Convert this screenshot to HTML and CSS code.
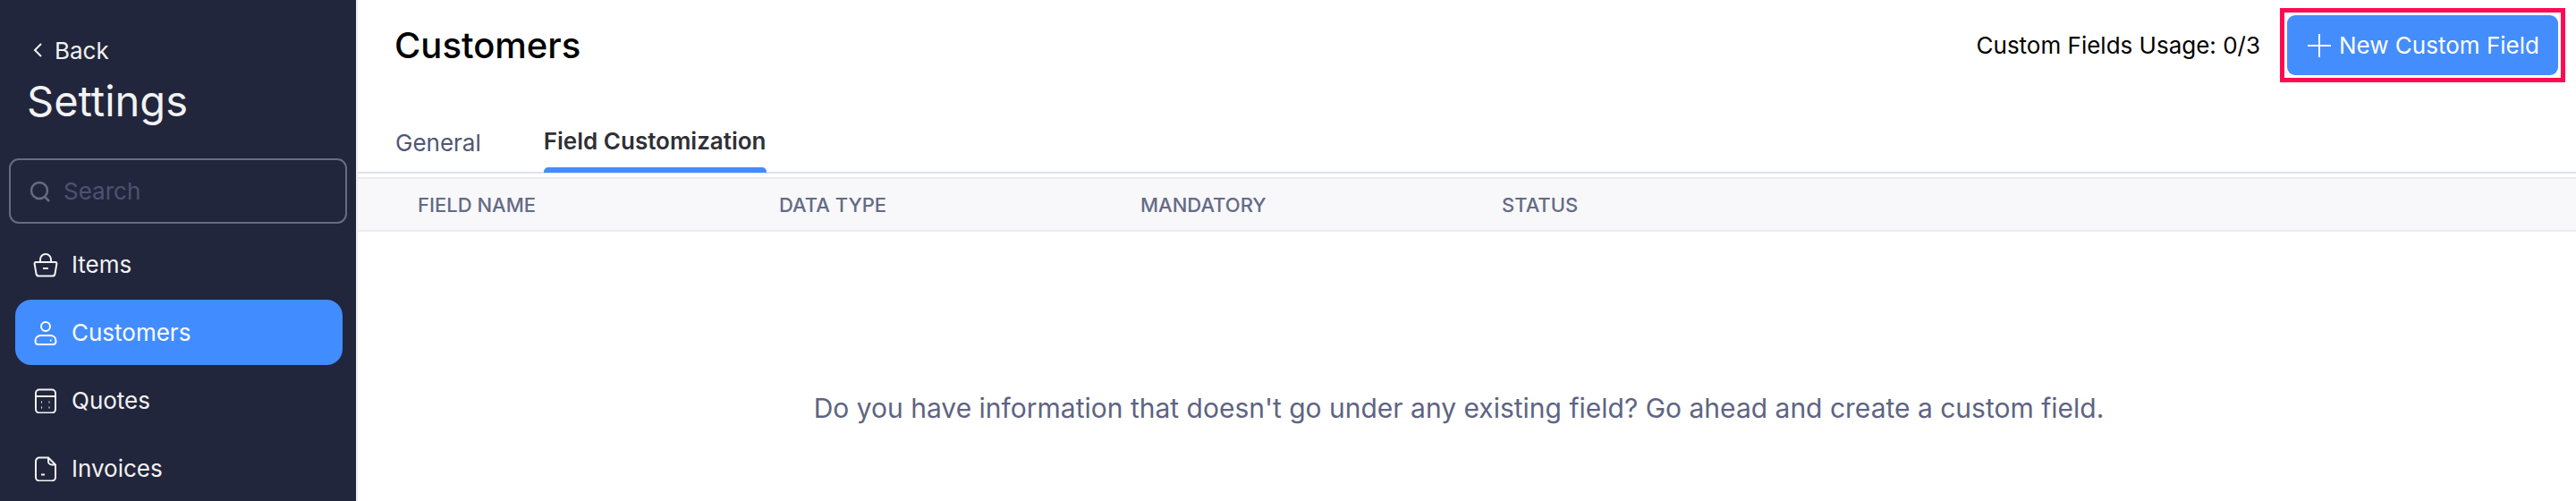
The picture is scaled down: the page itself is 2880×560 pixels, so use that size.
FILE: index.html
```html
<!DOCTYPE html>
<html lang="en">
  <head>
    <meta charset="UTF-8" />
    <title>Customers - Settings</title>
    <link rel="stylesheet" href="styles.css">
  </head>
  <body>
    <div class="app">
      <!-- Sidebar -->
      <aside class="sidebar">
        <a class="back-link" href="#">
          <svg class="back-icon" viewBox="0 0 12 18" fill="none"><path d="M10 2 3 9l7 7" /></svg>
          Back
        </a>
        <h2>Settings</h2>
        <div class="search">
          <svg class="search-icon" viewBox="0 0 24 24" fill="none"><circle cx="11" cy="11" r="9" /><path d="m17 18 5 5" /></svg>
          <span>Search</span>
        </div>
        <ul class="nav">
          <li>
            <svg viewBox="0 0 28 28" fill="none"><path d="M8 11V8a6 6 0 0 1 12 0v3" /><path d="M3 11h22a1.500 1.500 0 0 1 1.400 1.800L24.500 24a3 3 0 0 1-3 2.500h-15a3 3 0 0 1-3-2.500L1.600 12.800A1.500 1.500 0 0 1 3 11Z" /><path d="M11 18h6" /></svg>
            Items
          </li>
          <li class="active">
            <svg viewBox="0 0 28 28" fill="none"><circle cx="14" cy="7" r="5" /><path d="M8 17h12a6 6 0 0 1 5.500 6c0 2-1 4-3 4H5.500c-2 0-3-2-3-4A6 6 0 0 1 8 17Z" /><path d="M19 22.500h1.500" /></svg>
            Customers
          </li>
          <li>
            <svg viewBox="0 0 28 28" fill="none"><rect x="3" y="1.500" width="22" height="26" rx="4" /><path d="M3 9h22" /><path d="M9 15.500h1M17.500 15.500h1M9 21.500h1M17.500 21.500h1" /></svg>
            Quotes
          </li>
          <li>
            <svg viewBox="0 0 28 28" fill="none"><path d="M17 1.500H7a4 4 0 0 0-4 4v18a4 4 0 0 0 4 4h14a4 4 0 0 0 4-4V9.500Z" /><path d="M17 1.500v4a4 4 0 0 0 4 4h4" /><path d="M9 20.500h4" /></svg>
            Invoices
          </li>
        </ul>
      </aside>

      <!-- Content Area -->
      <main class="content">
        <header class="topbar">
          <h1>Customers</h1>
          <div class="topbar-right">
            <span class="usage">Custom Fields Usage: 0/3</span>
            <div class="highlight">
              <button class="new-button" type="button">
                <svg viewBox="0 0 26 26" fill="none"><path d="M13 0v26M0 13h26" /></svg>
                New Custom Field
              </button>
            </div>
          </div>
        </header>

        <nav class="tabs">
          <a href="#">General</a>
          <a class="active" href="#">Field Customization</a>
        </nav>

        <div class="table-head">
          <span>Field Name</span>
          <span>Data Type</span>
          <span>Mandatory</span>
          <span>Status</span>
        </div>

        <p class="empty">Do you have information that doesn't go under any existing field? Go ahead and create a custom field.</p>
      </main>
    </div>
  </body>
</html>
```

FILE: styles.css
```css
* {
  margin: 0;
  padding: 0;
  box-sizing: border-box;
}

html,
body {
  height: 100%;
  overflow: hidden;
}

body {
  font-family: Inter, "Noto Sans", sans-serif;
  background: #fff;
}

.app {
  display: flex;
  height: 560px;
  overflow: hidden;
}

/* Sidebar */
.sidebar {
  width: 400px;
  flex-shrink: 0;
  height: 100%;
  padding: 0 10px;
  background: #22263c;
  border-right: 2px solid #ecedf2;
  color: #f2f2f2;
  overflow: hidden;
}

.back-link {
  display: flex;
  align-items: center;
  gap: 13px;
  margin: 40px 0 0 26px;
  height: 32px;
  font-size: 26px;
  color: #f2f2f2;
  text-decoration: none;
}

.back-icon {
  width: 12px;
  height: 18px;
}

.back-icon path {
  stroke: #f2f2f2;
  stroke-width: 2;
}

.sidebar h2 {
  margin: 13px 0 0 20px;
  font-size: 47px;
  line-height: 56px;
  font-weight: 400;
  color: #f2f2f2;
}

.search {
  display: flex;
  align-items: center;
  gap: 14px;
  width: 378px;
  height: 73px;
  margin-top: 36px;
  padding-left: 21px;
  border: 2px solid #686c83;
  border-radius: 11px;
  font-size: 26px;
  color: #4d5270;
}

.search-icon {
  width: 24px;
  height: 24px;
}

.search-icon circle,
.search-icon path {
  stroke: #686c83;
  stroke-width: 2.500;
}

.nav {
  list-style: none;
  margin: 9px 0 0 7px;
}

.nav li {
  display: flex;
  align-items: center;
  gap: 15px;
  width: 366px;
  height: 73px;
  margin-bottom: 3px;
  padding-left: 20px;
  border-radius: 18px;
  font-size: 26px;
}

.nav li svg {
  width: 28px;
  height: 28px;
  flex-shrink: 0;
}

.nav li svg * {
  stroke: #f2f2f2;
  stroke-width: 2;
}

.nav li.active {
  background: #418dff;
  color: #fff;
}

.nav li.active svg * {
  stroke: #fff;
}

/* Content */
.content {
  flex-grow: 1;
  min-width: 0;
}

.topbar {
  display: flex;
  align-items: center;
  justify-content: space-between;
  height: 101px;
  padding: 0 12px 0 41px;
}

.topbar h1 {
  font-size: 40px;
  font-weight: 500;
  color: #000;
}

.topbar-right {
  display: flex;
  align-items: center;
  gap: 22px;
}

.usage {
  font-size: 26px;
  color: #000;
}

.highlight {
  padding: 3px;
  border: 5px solid #ff0a50;
}

.new-button {
  display: flex;
  align-items: center;
  gap: 9px;
  width: 303px;
  height: 67px;
  padding-left: 23px;
  border: none;
  border-radius: 9px;
  background: #448dfd;
  font-family: inherit;
  font-size: 26px;
  color: #fff;
}

.new-button svg {
  width: 26px;
  height: 26px;
}

.new-button svg path {
  stroke: #fff;
  stroke-width: 2;
}

.tabs {
  display: flex;
  gap: 70px;
  height: 93px;
  padding: 0 0 0 42px;
  border-bottom: 2px solid #dfe2ea;
}

.tabs a {
  display: block;
  height: 92px;
  padding-top: 40px;
  font-size: 26px;
  line-height: 38px;
  color: #4f5672;
  text-decoration: none;
}

.tabs a.active {
  padding-top: 38px;
  font-weight: 600;
  color: #2f3035;
}

.tabs a.active::after {
  content: "";
  display: block;
  height: 6px;
  margin-top: 10px;
  background: #418dff;
  border-radius: 5px 5px 0 0;
}

.table-head {
  display: grid;
  grid-template-columns: repeat(4, 404px);
  align-items: center;
  height: 61px;
  margin-top: 4px;
  padding-left: 67px;
  background: #f8f8fb;
  border-top: 2px solid #ebebf3;
  border-bottom: 2px solid #ebebf3;
  font-size: 22px;
  font-weight: 500;
  text-transform: uppercase;
  color: #646b85;
}

.empty {
  margin-top: 179px;
  padding-right: 18px;
  text-align: center;
  font-size: 30px;
  line-height: 36px;
  color: #5e6482;
}
```
